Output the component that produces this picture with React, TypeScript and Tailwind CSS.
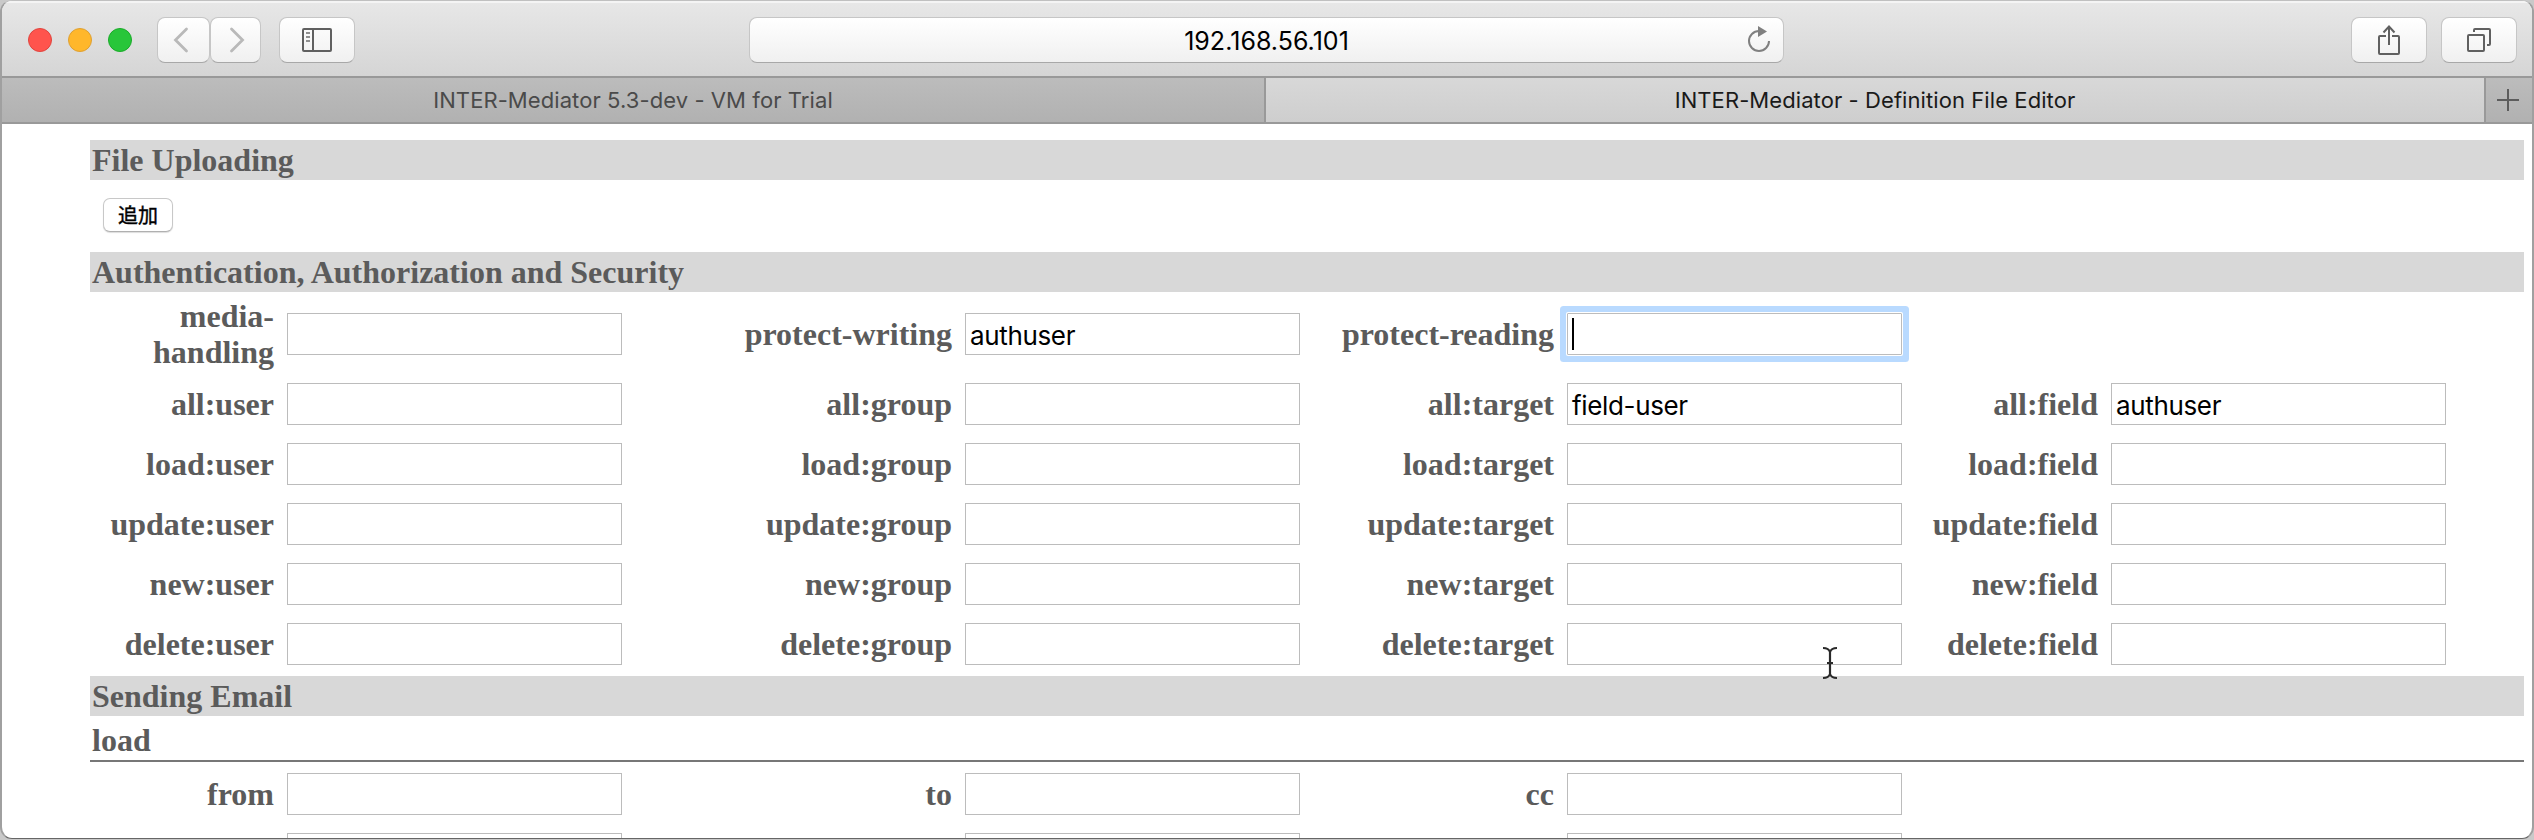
import React from "react";

const Field = ({ label, value, focus }: { label: string; value?: string; focus?: boolean }) => (
  <>
    <div className="pr-[13px] text-right leading-[36px]">{label}</div>
    <div
      className={
        "flex h-[42px] items-center border border-[#bcbcbc] bg-white pl-[4px] font-['Inter',sans-serif] text-[26px] font-normal tracking-[-0.35px] text-black " +
        (focus ? "rounded-[1px] shadow-[0_0_0_1px_#fff,0_0_0_7px_#b9daff]" : "")
      }
    >
      {focus && <span className="h-8 w-[2px] bg-black" />}
      {value && <span className="mt-[3px] leading-none">{value}</span>}
    </div>
  </>
);

const Row = ({ children, tall }: { children: React.ReactNode; tall?: boolean }) => (
  <div
    className={
      "grid shrink-0 grid-cols-[197px_335px_343px_335px_267px_335px_209px_335px] items-center " +
      (tall ? "h-20" : "h-[60px]")
    }
  >
    {children}
  </div>
);

const Heading = ({ children }: { children: React.ReactNode }) => (
  <h2 className="h-10 shrink-0 bg-[#d8d8d8] pl-[2px] leading-10">{children}</h2>
);

const ToolButton = ({ children, className }: { children: React.ReactNode; className: string }) => (
  <div
    className={
      "flex h-[46px] items-center justify-center rounded-[8px] border border-[#c6c6c6] border-b-[#a8a8a8] bg-linear-to-b from-white to-[#f0f0f0] " +
      className
    }
  >
    {children}
  </div>
);

export default function App() {
  return (
    <div className="h-[840px] w-[2534px] overflow-hidden bg-[#c9c9c9]">
      <div className="relative flex h-[839px] w-full flex-col overflow-hidden rounded-[12px] border-x-2 border-t border-b border-x-[#a0a0a0] border-t-[#c0c0c0] border-b-[#666] bg-white">
        <header className="flex h-[75px] shrink-0 items-start border-t-2 border-[#f4f4f4] bg-linear-to-b from-[#e7e7e7] to-[#d5d5d5] pt-[14px]">
          <div className="ml-[26px] flex h-[45px] items-center gap-4">
            <span className="size-6 rounded-full border border-[#e0443e] bg-[#ff544d]" />
            <span className="size-6 rounded-full border border-[#dea033] bg-[#ffb72b]" />
            <span className="size-6 rounded-full border border-[#1aab29] bg-[#28c63a]" />
          </div>
          <ToolButton className="ml-[25px] w-[53px] pr-[5px]">
            <svg width="16" height="26" viewBox="0 0 16 26" fill="none" stroke="#b9b9b9" strokeWidth="2.8" strokeLinecap="round">
              <path d="M13.500 2 2.500 13l11 11" />
            </svg>
          </ToolButton>
          <ToolButton className="w-[51px] pl-[3px]">
            <svg width="16" height="26" viewBox="0 0 16 26" fill="none" stroke="#b9b9b9" strokeWidth="2.8" strokeLinecap="round">
              <path d="m2.500 2 11 11-11 11" />
            </svg>
          </ToolButton>
          <ToolButton className="ml-[18px] w-[76px]">
            <svg width="30" height="24" viewBox="0 0 30 24" fill="none" stroke="#606060" strokeWidth="2">
              <rect x="1" y="1" width="28" height="22" rx="1" />
              <path d="M11 1v22" />
              <path d="M4 5h4M4 9h4M4 13h4" stroke="#909090" />
            </svg>
          </ToolButton>
          <ToolButton className="relative ml-[394px] w-[1035px]">
            <span className="mt-[3px] font-['Inter',sans-serif] text-[25px] leading-none tracking-[0.02px] text-black">
              192.168.56.101
            </span>
            <svg className="absolute top-2 right-[12px]" width="24" height="28" viewBox="0 0 24 28" fill="none" stroke="#808080" strokeWidth="2">
              <path d="M12 5A10 10 0 1 0 22 15" />
              <path d="M11 0v11l9-5.500z" fill="#808080" stroke="none" />
            </svg>
          </ToolButton>
          <ToolButton className="ml-[567px] w-[76px]">
            <svg width="22" height="30" viewBox="0 0 22 30" fill="none" stroke="#606060" strokeWidth="2">
              <path d="M8 11H2a1 1 0 0 0-1 1v16a1 1 0 0 0 1 1h18a1 1 0 0 0 1-1V12a1 1 0 0 0-1-1h-6M11 20V2M5.500 7.500 11 1.500l5.500 6" />
            </svg>
          </ToolButton>
          <ToolButton className="ml-[14px] w-[76px]">
            <svg width="24" height="24" viewBox="0 0 24 24" fill="none" stroke="#606060" strokeWidth="2">
              <rect x="1" y="7" width="16" height="16" rx="1" />
              <path d="M7 4V2a1 1 0 0 1 1-1h14a1 1 0 0 1 1 1v14a1 1 0 0 1-1 1h-2" />
            </svg>
          </ToolButton>
        </header>
        <nav className="flex h-12 shrink-0 border-y-2 border-[#999] font-['Inter',sans-serif] text-[22px] leading-[44px] tracking-[0.08px]">
          <div className="w-[1264px] border-r-2 border-[#999] bg-linear-to-b from-[#bcbcbc] to-[#b1b1b1] text-center text-[#4a4a4a]">
            INTER-Mediator 5.3-dev - VM for Trial
          </div>
          <div className="w-[1218px] bg-linear-to-b from-[#d8d8d8] to-[#cecece] text-center text-[#1a1a1a]">
            INTER-Mediator - Definition File Editor
          </div>
          <div className="flex flex-1 items-center justify-center border-l-2 border-[#999] bg-linear-to-b from-[#bcbcbc] to-[#b1b1b1] pr-[2px]">
            <svg width="22" height="22" viewBox="0 0 22 22" stroke="#5c5c5c" strokeWidth="2">
              <path d="M11 0v22M0 11h22" />
            </svg>
          </div>
        </nav>
        <main className="flex min-h-0 flex-1 flex-col overflow-hidden pt-4 pr-2 pl-[88px] font-['Liberation_Serif',serif] text-[32px] font-bold text-[#5b5b5b]">
          <Heading>File Uploading</Heading>
          <div className="flex h-[72px] shrink-0 items-start pt-[18px] pl-[13px]">
            <button className="h-[34px] w-[70px] rounded-[7px] border border-[#c8c8c8] border-b-[#b0b0b0] bg-white font-['Noto_Sans_CJK_JP',sans-serif] text-[20px] leading-[30px] font-normal text-black shadow-[0_1px_1px_#ddd] [-webkit-text-stroke:0.4px_black]">
              追加
            </button>
          </div>
          <Heading>Authentication, Authorization and Security</Heading>
          <div className="flex shrink-0 flex-col pt-[2px] pb-[2px]">
            <Row tall>
              <Field label="media-handling" />
              <Field label="protect-writing" value="authuser" />
              <Field label="protect-reading" focus />
            </Row>
            {["all", "load", "update", "new", "delete"].map((k) => (
              <Row key={k}>
                <Field label={k + ":user"} />
                <Field label={k + ":group"} />
                <Field label={k + ":target"} value={k === "all" ? "field-user" : undefined} />
                <Field label={k + ":field"} value={k === "all" ? "authuser" : undefined} />
              </Row>
            ))}
          </div>
          <Heading>Sending Email</Heading>
          <h3 className="h-[46px] shrink-0 border-b-2 border-[#777] pl-[2px] leading-[48px]">load</h3>
          <div className="pt-[2px]">
            <Row>
              <Field label="from" />
              <Field label="to" />
              <Field label="cc" />
            </Row>
            <Row>
              <Field label="" />
              <Field label="" />
              <Field label="" />
            </Row>
          </div>
        </main>
        <svg className="absolute top-[645px] left-[1820px]" width="16" height="34" viewBox="0 0 16 34" fill="none" stroke="#2a2a2a" strokeWidth="2.2">
          <path d="M1 2c4 0 6 1 7 4 1-3 3-4 7-4M8 5v24M1 32c4 0 6-1 7-4 1 3 3 4 7 4M5 17h6" />
        </svg>
      </div>
    </div>
  );
}
